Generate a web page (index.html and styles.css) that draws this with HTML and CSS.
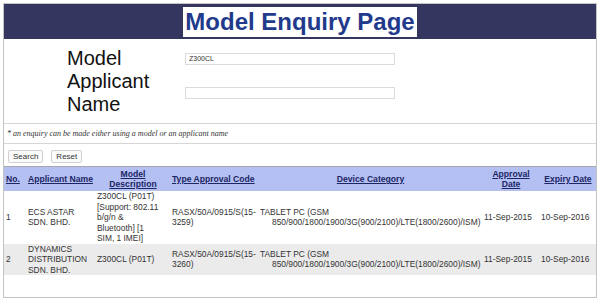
FILE: index.html
```html
<!DOCTYPE html>
<html lang="en">
<head>
    <meta charset="UTF-8">
    <meta name="viewport" content="width=device-width, initial-scale=1.0">
    <title>Model Enquiry Page</title>
    <link rel="stylesheet" href="styles.css">
</head>
<body>
    <div class="page">
        <div class="banner">
            <h1>Model Enquiry Page</h1>
        </div>
        <form class="enquiry">
            <div class="fields">
                <label for="model">Model</label>
                <input type="text" id="model" value="Z300CL">
                <label for="applicant">Applicant Name</label>
                <input type="text" id="applicant">
            </div>
            <p class="note">* an enquiry can be made either using a model or an applicant name</p>
            <div class="actions">
                <button type="submit">Search</button>
                <button type="reset">Reset</button>
            </div>
        </form>
        <table class="results">
            <colgroup>
                <col class="c-no">
                <col class="c-app">
                <col class="c-model">
                <col class="c-code">
                <col class="c-cat">
                <col class="c-date">
                <col class="c-exp">
            </colgroup>
            <thead>
                <tr>
                    <th class="left"><a>No.</a></th>
                    <th class="left"><a>Applicant Name</a></th>
                    <th><a>Model<br>Description</a></th>
                    <th class="left"><a>Type Approval Code</a></th>
                    <th><a>Device Category</a></th>
                    <th><a>Approval<br>Date</a></th>
                    <th><a>Expiry Date</a></th>
                </tr>
            </thead>
            <tbody>
                <tr>
                    <td>1</td>
                    <td>ECS ASTAR SDN. BHD.</td>
                    <td class="desc">Z300CL (P01T) [Support: 802.11 b/g/n &amp; Bluetooth] [1 SIM, 1 IMEI]</td>
                    <td>RASX/50A/0915/S(15-3259)</td>
                    <td class="cat">TABLET PC (GSM 850/900/1800/1900/3G(900/2100)/LTE(1800/2600)/ISM)</td>
                    <td>11-Sep-2015</td>
                    <td>10-Sep-2016</td>
                </tr>
                <tr class="alt">
                    <td>2</td>
                    <td>DYNAMICS DISTRIBUTION SDN. BHD.</td>
                    <td class="desc">Z300CL (P01T)</td>
                    <td>RASX/50A/0915/S(15-3260)</td>
                    <td class="cat">TABLET PC (GSM 850/900/1800/1900/3G(900/2100)/LTE(1800/2600)/ISM)</td>
                    <td>11-Sep-2015</td>
                    <td>10-Sep-2016</td>
                </tr>
            </tbody>
        </table>
    </div>
</body>
</html>
```

FILE: styles.css
```css
body {
    margin: 0;
    font-family: "Liberation Sans", Arial, sans-serif;
    background: white;
}
.page {
    margin: 3px 3px 0 3px;
    height: 293px;
    border: 1px solid #c4c4c4;
    overflow: hidden;
}
.banner {
    background-color: #34365f;
    height: 35px;
    display: flex;
    align-items: center;
    justify-content: center;
}
.banner h1 {
    margin: 0;
    background: white;
    color: #223a8c;
    font-size: 24px;
    line-height: 30px;
    padding: 0 2px;
}
.fields {
    display: grid;
    grid-template-columns: 118px 210px;
    align-items: center;
    padding: 8px 0 7px 63px;
}
.fields label {
    font-size: 20px;
    line-height: 23px;
    color: #111;
    width: 100px;
}
.fields input {
    height: 12px;
    box-sizing: border-box;
    border: 1px solid #dcdcdc;
    font-family: "Liberation Sans", Arial, sans-serif;
    font-size: 7px;
    color: #333;
    padding: 0 3px;
    margin: 0;
}
.note {
    margin: 0;
    border-top: 1px solid #d6d6d6;
    border-bottom: 1px solid #d6d6d6;
    font-family: "Liberation Serif", "Times New Roman", serif;
    font-style: italic;
    font-size: 8px;
    line-height: 19px;
    padding-left: 3px;
    color: #333;
}
.actions {
    display: flex;
    gap: 8px;
    padding: 6px 4px 3px 4px;
}
.actions button {
    font-family: "Liberation Sans", Arial, sans-serif;
    font-size: 8px;
    color: #333;
    background: #fbfbfb;
    border: 1px solid #d0d0d0;
    border-radius: 2px;
    height: 13px;
    padding: 0 4px;
}
.results {
    width: 100%;
    border-collapse: collapse;
    table-layout: fixed;
    border-top: 1px solid #a8a8a8;
    font-size: 8.4px;
}
.c-no { width: 22px; }
.c-app { width: 69px; }
.c-model { width: 75px; }
.c-code { width: 88px; }
.c-cat { width: 224px; }
.c-date { width: 57px; }
.results th {
    background-color: #b4bff2;
    color: #1b2666;
    font-size: 8.6px;
    height: 24px;
    line-height: 10px;
    padding: 0 1px 0 2px;
    font-weight: bold;
    white-space: nowrap;
}
.results th a {
    text-decoration: underline;
}
.results th.left {
    text-align: left;
}
.results td {
    color: #333;
    line-height: 10.5px;
    padding: 0 1px 0 2px;
    vertical-align: middle;
}
.results td.desc {
    padding-right: 9px;
}
.results td.cat {
    padding-left: 14px;
    text-indent: -12px;
}
.results tr.alt td {
    background-color: #ebebeb;
}
```
